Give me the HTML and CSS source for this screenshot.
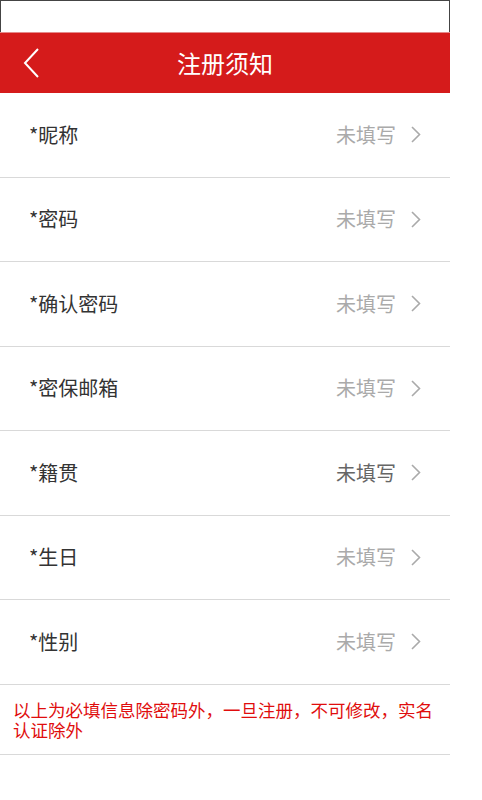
FILE: index.html
```html
<!DOCTYPE html>
<html lang="zh-CN">
<head>
<meta charset="utf-8">
<title>注册须知</title>
<link rel="stylesheet" href="styles.css">
</head>
<body>
<div class="frame">
  <div class="statusbar"></div>
  <header class="header">
    <span class="back">
      <svg width="18" height="30" viewBox="0 0 18 30"><polyline points="15,1 2,15 15,29" fill="none" stroke="#fff" stroke-width="2"/></svg>
    </span>
    <h1 class="title">注册须知</h1>
  </header>
  <ul class="list">
    <li class="row"><span class="label">*昵称</span><span class="value">未填写</span><span class="chev"><svg width="10" height="17" viewBox="0 0 10 17"><polyline points="1,1 8.5,8.5 1,16" fill="none" stroke="#aaa" stroke-width="1.6"/></svg></span></li>
    <li class="row"><span class="label">*密码</span><span class="value">未填写</span><span class="chev"><svg width="10" height="17" viewBox="0 0 10 17"><polyline points="1,1 8.5,8.5 1,16" fill="none" stroke="#aaa" stroke-width="1.6"/></svg></span></li>
    <li class="row"><span class="label">*确认密码</span><span class="value">未填写</span><span class="chev"><svg width="10" height="17" viewBox="0 0 10 17"><polyline points="1,1 8.5,8.5 1,16" fill="none" stroke="#aaa" stroke-width="1.6"/></svg></span></li>
    <li class="row"><span class="label">*密保邮箱</span><span class="value">未填写</span><span class="chev"><svg width="10" height="17" viewBox="0 0 10 17"><polyline points="1,1 8.5,8.5 1,16" fill="none" stroke="#aaa" stroke-width="1.6"/></svg></span></li>
    <li class="row"><span class="label">*籍贯</span><span class="value value-dark">未填写</span><span class="chev"><svg width="10" height="17" viewBox="0 0 10 17"><polyline points="1,1 8.5,8.5 1,16" fill="none" stroke="#aaa" stroke-width="1.6"/></svg></span></li>
    <li class="row"><span class="label">*生日</span><span class="value">未填写</span><span class="chev"><svg width="10" height="17" viewBox="0 0 10 17"><polyline points="1,1 8.5,8.5 1,16" fill="none" stroke="#aaa" stroke-width="1.6"/></svg></span></li>
    <li class="row"><span class="label">*性别</span><span class="value">未填写</span><span class="chev"><svg width="10" height="17" viewBox="0 0 10 17"><polyline points="1,1 8.5,8.5 1,16" fill="none" stroke="#aaa" stroke-width="1.6"/></svg></span></li>
  </ul>
  <p class="notice">以上为必填信息除密码外，一旦注册，不可修改，实名认证除外</p>
</div>
</body>
</html>
```

FILE: styles.css
```css
* { box-sizing: border-box; }
html, body { margin: 0; padding: 0; background: #fff; }
body {
  font-family: "Noto Sans CJK SC", "Noto Sans", sans-serif;
  color: #333;
}
.frame { width: 450px; }
.statusbar {
  height: 32px;
  border: 1px solid #444;
  border-bottom: none;
  background: #fff;
}
.header {
  height: 61px;
  background: #d51b1b;
  border-top: 1px solid #e58a8a;
  display: flex;
  align-items: center;
  justify-content: center;
  position: relative;
}
.back {
  position: absolute;
  left: 23px;
  top: 15px;
  display: flex;
}
.title {
  margin: 0;
  font-size: 24px;
  font-weight: normal;
  color: #fff;
  line-height: 1;
}
.list { list-style: none; margin: 0; padding: 0; }
.row {
  height: 84.5px;
  border-bottom: 1px solid #d9d9d9;
  display: flex;
  align-items: center;
  padding: 0 29px 0 29px;
}
.label { flex: 1; font-size: 20px; color: #333; line-height: 1; }
.value { font-size: 20px; color: #aaa; line-height: 1; margin-right: 15px; }
.value-dark { color: #666; }
.chev { display: flex; }
.notice {
  margin: 0;
  padding: 15px 13px 14px 13px;
  font-size: 17.5px;
  line-height: 20px;
  color: #e00d0d;
  border-bottom: 1px solid #d9d9d9;
}
```
